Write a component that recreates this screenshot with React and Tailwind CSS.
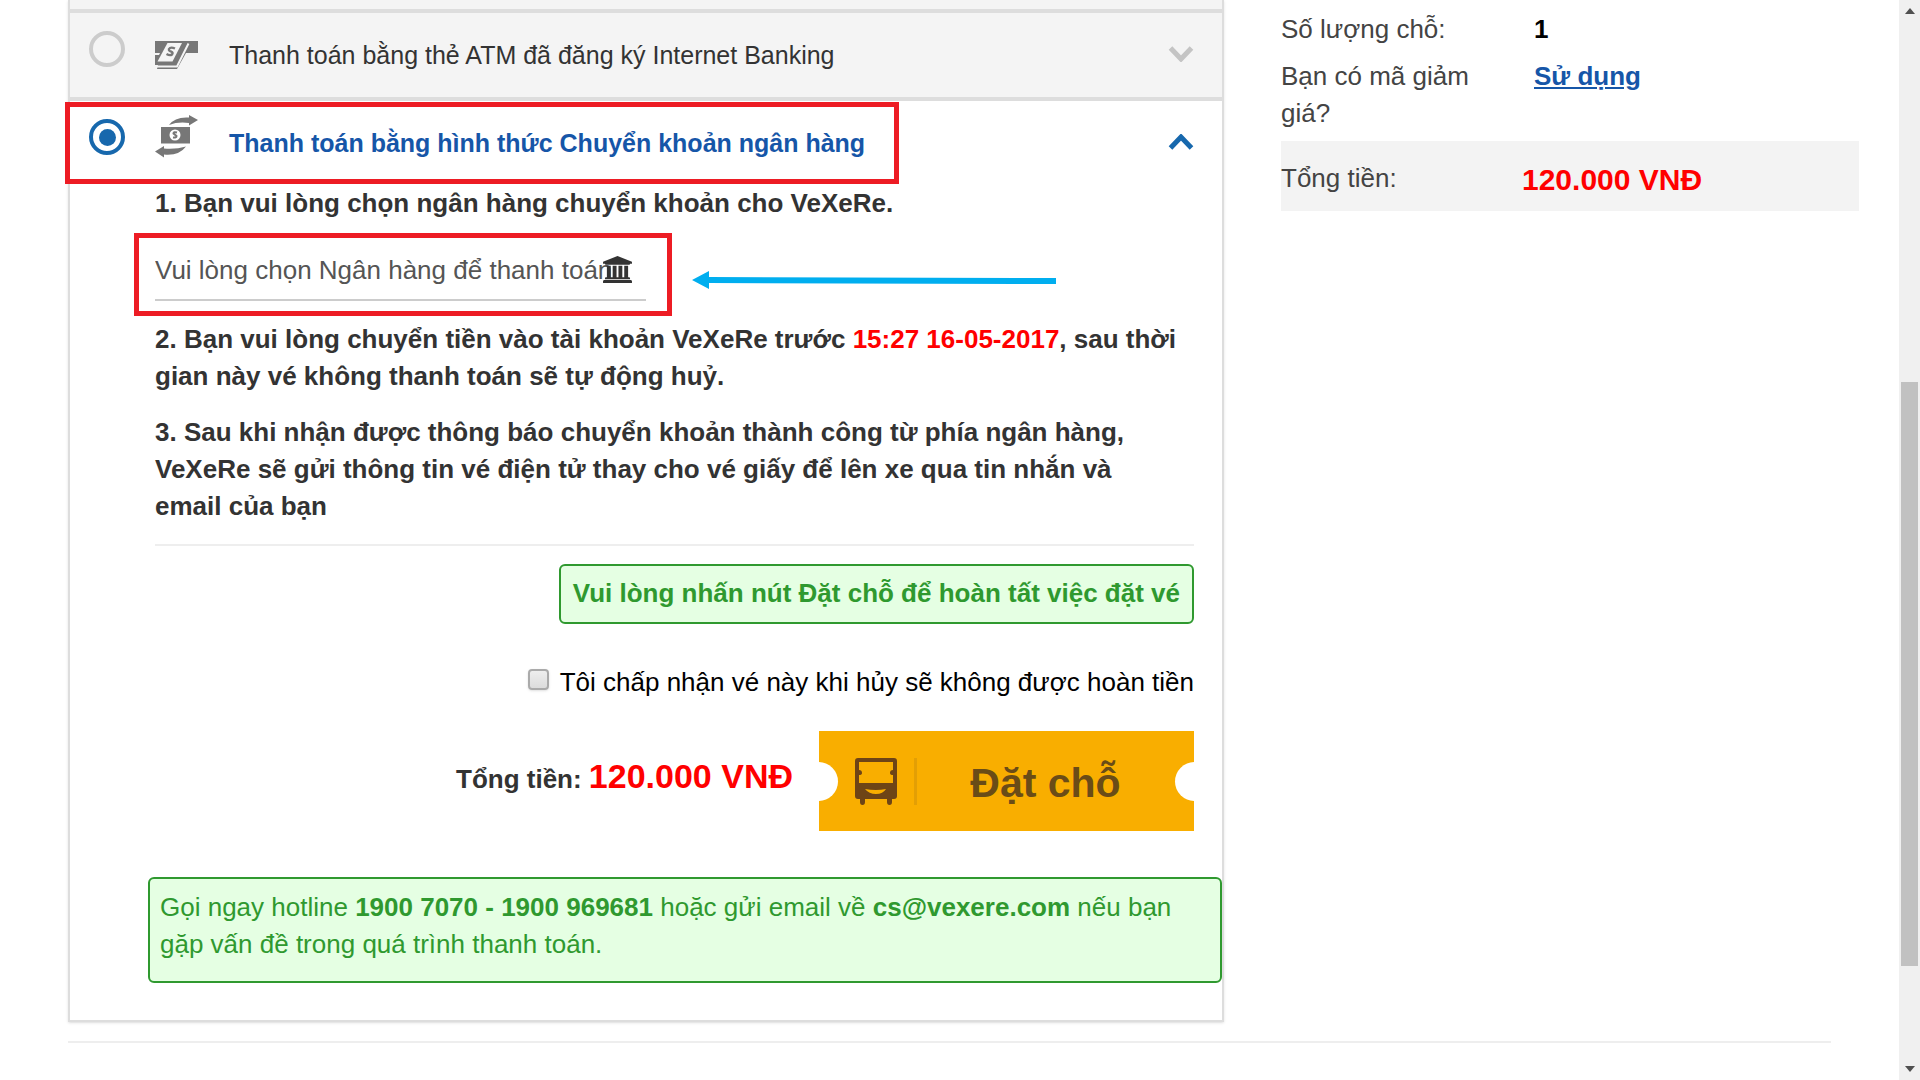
import React from "react";

const BankIcon = ({ className }) => (
  <svg viewBox="0 0 1920 1792" className={className} fill="currentColor" aria-hidden="true">
    <path d="M960 0l960 384v128h-128q0 26-20.5 45t-48.5 19h-1526q-28 0-48.5-19t-20.5-45h-128v-128zM256 640h256v768h128v-768h256v768h128v-768h256v768h128v-768h256v768h59q28 0 48.5 19t20.5 45v64h-1664v-64q0-26 20.5-45t48.5-19h59v-768zM1851 1600q28 0 48.5 19t20.5 45v128h-1920v-128q0-26 20.5-45t48.5-19h1782z" />
  </svg>
);

const AtmIcon = () => (
  <svg viewBox="0 0 43 28" className="h-7 w-[43px] shrink-0" aria-hidden="true">
    <path d="M0 0H43V12H31L22 28H2L3 24H0V14H4L5 12H0Z" fill="#777" />
    <path d="M12.500 2H27L17.500 20.500H2.500Z" fill="#f4f4f4" />
    <path d="M20 7.500Q15.500 5.500 14 8Q13.500 10 16 10.500Q18.500 11.500 17 13.500Q15 15 11.500 13" fill="none" stroke="#777" strokeWidth="2.400" />
    <path d="M33.500 2.500L22 25.500H1" fill="none" stroke="#f4f4f4" strokeWidth="2" />
  </svg>
);

const TransferIcon = () => (
  <svg viewBox="0 0 43 43" className="h-[43px] w-[43px] shrink-0" aria-hidden="true">
    <g fill="#777">
      <path d="M14 10Q20 1.500 34 2.500V0L43 5L34 10.500V8Q23 6.500 14 10Z" />
      <path d="M31 31.500Q24 41 9 39.500V42.500L0 36.500L9 31V33.500Q21 34.500 31 31.500Z" />
      <path d="M6 12H35V28.500H6Z" />
    </g>
    <circle cx="20" cy="20" r="5.500" fill="#fff" />
    <path d="M22 17.500Q18.500 16.500 18.500 18.500L21.500 21Q21.500 23 18 22.500" fill="none" stroke="#777" strokeWidth="2" />
  </svg>
);

const Chevron = ({ up }) => (
  <svg viewBox="0 0 26 16" className="mb-0.5 h-4 w-[26px] shrink-0" fill="none" aria-hidden="true">
    <path
      d={up ? "M2.500 14L13 3L23.500 14" : "M2.500 2L13 13L23.500 2"}
      stroke={up ? "#1768ad" : "#c4c4c4"}
      strokeWidth="5"
    />
  </svg>
);

const BusIcon = () => (
  <svg viewBox="0 0 42 47" className="h-[47px] w-[42px] shrink-0" aria-hidden="true">
    <path
      fillRule="evenodd"
      fill="#6e4416"
      d="M3 0H39Q42 0 42 3V38Q42 41 39 41H37V44Q37 47 34.500 47Q32 47 32 44V41H10V44Q10 47 7.500 47Q5 47 5 44V41H3Q0 41 0 38V3Q0 0 3 0ZM4 4V12Q7 12 7 15Q7 17 4 17V25H38V17Q35 17 35 15Q35 12 38 12V4ZM10 31Q14 36 21 36Q28 36 31 31Q21 33 10 31Z"
    />
  </svg>
);

const radioClass =
  "mb-3 grid size-9 shrink-0 appearance-none place-content-center rounded-full border-4 border-[#ccc] bg-transparent checked:border-[#1768ad] before:size-[17px] before:rounded-full checked:before:bg-[#1768ad]";

function MethodRow({ id, icon, label, open }) {
  return (
    <div
      className={
        open
          ? "relative flex h-[84px] items-center bg-white pr-7 pl-[19px]"
          : "relative flex h-[84px] items-center bg-[#f4f4f4] pr-7 pl-[19px]"
      }
    >
      <input type="radio" name="method" id={id} defaultChecked={open} className={radioClass} />
      <div className="ml-[30px] flex h-[60px] items-start">
        <div className={open ? "pt-0.5" : "pt-4"}>{icon}</div>
      </div>
      <label
        htmlFor={id}
        className={
          open
            ? "ml-[31px] flex-1 text-[25px] font-bold text-[#1656a8]"
            : "ml-[31px] flex-1 text-[25px] text-[#333]"
        }
      >
        {label}
      </label>
      <Chevron up={open} />
      {open && (
        <div className="pointer-events-none absolute top-px -left-[5px] h-[82px] w-[834px] border-5 border-[#ed1c24]" />
      )}
    </div>
  );
}

function ScrollRail() {
  return (
    <div className="flex w-[21px] shrink-0 flex-col items-center bg-[#f0f0f0] py-2">
      <svg viewBox="0 0 10 6" className="h-1.5 w-2.5" aria-hidden="true">
        <path d="M0 6L5 0L10 6Z" fill="#505050" />
      </svg>
      <div className="mt-[368px] h-[584px] w-[17px] bg-[#c1c1c1]" />
      <svg viewBox="0 0 10 6" className="mt-auto h-1.5 w-2.5" aria-hidden="true">
        <path d="M0 0H10L5 6Z" fill="#505050" />
      </svg>
    </div>
  );
}

export default function App() {
  return (
    <div className="flex min-h-screen bg-white font-['Liberation_Sans',Arial,sans-serif] text-[26px] leading-[37px] text-[#333]">
      <div className="min-w-0 flex-1">
        <div className="grid grid-cols-[2fr_1fr] items-start gap-[57px] pr-10 pl-[68px]">
          <main className="min-w-0 border-2 border-t-0 border-[#ddd] pb-[37px] shadow-sm">
            <div className="h-[9px] bg-[#f4f4f4]" />
            <div className="h-1 bg-[#ddd]" />
            <MethodRow id="atm" icon={<AtmIcon />} label="Thanh toán bằng thẻ ATM đã đăng ký Internet Banking" />
            <div className="h-1 bg-[#ddd]" />
            <MethodRow
              id="transfer"
              open
              icon={<TransferIcon />}
              label="Thanh toán bằng hình thức Chuyển khoản ngân hàng"
            />

            <section className="pr-7 pl-[85px]">
              <p className="font-bold">1. Bạn vui lòng chọn ngân hàng chuyển khoản cho VeXeRe.</p>

              <div className="relative mt-6 h-[55px] w-[491px] border-b-2 border-[#ccc]">
                <select
                  aria-label="Ngân hàng"
                  className="h-12 w-full appearance-none bg-transparent text-[#555]"
                >
                  <option>Vui lòng chọn Ngân hàng để thanh toán</option>
                </select>
                <BankIcon className="pointer-events-none absolute top-2.5 right-[14px] h-[27px] w-[29px]" />
                <div className="pointer-events-none absolute -top-[13px] -left-[21px] h-[83px] w-[538px] border-5 border-[#ed1c24]" />
                <svg
                  viewBox="0 0 364 18"
                  className="pointer-events-none absolute top-[25px] left-[537px] h-[18px] w-[364px]"
                  aria-hidden="true"
                >
                  <path d="M0 9L17 0V6L364 7V13L17 12V18Z" fill="#00aeef" />
                </svg>
              </div>

              <p className="mt-5 font-bold">
                2. Bạn vui lòng chuyển tiền vào tài khoản VeXeRe trước{" "}
                <span className="text-[#f00]">15:27 16-05-2017</span>, sau thời gian này vé không thanh toán sẽ tự
                động huỷ.
              </p>
              <p className="mt-[19px] pr-4 font-bold">
                3. Sau khi nhận được thông báo chuyển khoản thành công từ phía ngân hàng, VeXeRe sẽ gửi thông tin vé
                điện tử thay cho vé giấy để lên xe qua tin nhắn và email của bạn
              </p>

              <div className="mt-[19px] border-t-2 border-[#eee]" />

              <div className="mt-[18px] flex justify-end">
                <p className="h-[60px] rounded-md border-2 border-[#2f992f] bg-[#e5ffe3] px-3 pt-[9px] font-bold whitespace-nowrap text-[#2f992f]">
                  Vui lòng nhấn nút Đặt chỗ để hoàn tất việc đặt vé
                </p>
              </div>

              <label className="mt-10 flex items-center justify-end gap-[11px] whitespace-nowrap text-black">
                <input
                  type="checkbox"
                  className="mb-1.5 size-[21px] shrink-0 appearance-none rounded-[4px] border-2 border-[#aaa] bg-linear-to-b from-[#eee] to-[#dcdcdc] shadow-sm"
                />
                Tôi chấp nhận vé này khi hủy sẽ không được hoàn tiền
              </label>

              <div className="mt-[30px] flex items-center justify-end gap-[26px]">
                <p className="mb-1.5 font-bold whitespace-nowrap">
                  Tổng tiền: <span className="text-[34px] text-[#f00]">120.000 VNĐ</span>
                </p>
                <button
                  type="button"
                  className="relative flex h-[100px] w-[375px] items-center overflow-hidden bg-[#f9ae00] pl-9 text-[#6a4c17]"
                >
                  <span className="absolute top-[31px] -left-5 size-[39px] rounded-full bg-white" />
                  <span className="absolute top-[31px] -right-5 size-[39px] rounded-full bg-white" />
                  <BusIcon />
                  <span className="ml-[17px] h-[47px] w-[3px] bg-[#e39f05]" />
                  <span className="flex-1 pt-1 pr-5 text-center text-[41px] font-bold">Đặt chỗ</span>
                </button>
              </div>
            </section>

            <p className="mt-[46px] ml-[78px] h-[106px] rounded-md border-2 border-[#2f992f] bg-[#e5ffe3] px-[10px] pt-[10px] text-[#2f992f]">
              Gọi ngay hotline <b>1900 7070 - 1900 969681</b> hoặc gửi email về <b>cs@vexere.com</b> nếu bạn gặp vấn
              đề trong quá trình thanh toán.
            </p>
          </main>

          <aside className="min-w-0 pt-[11px] text-[#444]">
            <dl>
              <div className="flex">
                <dt className="w-[253px] pr-10">Số lượng chỗ:</dt>
                <dd className="font-bold text-black">1</dd>
              </div>
              <div className="mt-[10px] flex">
                <dt className="w-[253px] pr-10">Bạn có mã giảm giá?</dt>
                <dd className="font-bold text-[#1656a8]">
                  <a href="#coupon" className="underline">
                    Sử dụng
                  </a>
                </dd>
              </div>
              <div className="mt-[9px] flex h-[70px] items-center bg-[#f3f3f3]">
                <dt className="w-[241px] pt-1">Tổng tiền:</dt>
                <dd className="pt-1.5 text-[30px] font-bold text-[#f00]">120.000 VNĐ</dd>
              </div>
            </dl>
          </aside>
        </div>
        <div className="mt-[19px] mr-[68px] ml-[68px] border-t-2 border-[#eee]" />
      </div>
      <ScrollRail />
    </div>
  );
}
